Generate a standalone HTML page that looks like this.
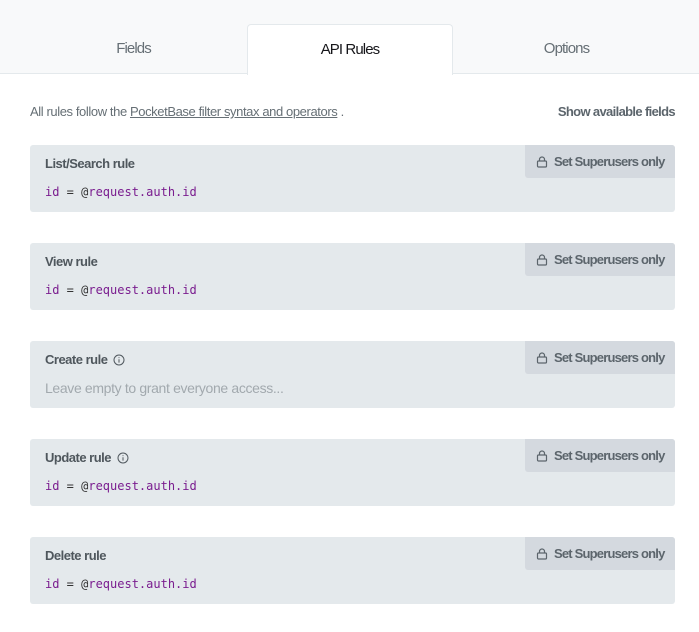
<!DOCTYPE html>
<html><head><meta charset="utf-8"><style>
*{box-sizing:border-box;margin:0;padding:0}
body{width:699px;height:632px;background:#fff;font-family:"Liberation Sans",sans-serif;color:#16161a;overflow:hidden;position:relative}
.top{position:absolute;left:0;top:0;width:699px;height:74px;background:#f8f9fa;border-bottom:1px solid #e4e9ec}
.tab{position:absolute;top:24px;height:50px;line-height:50px;text-align:center;font-size:15px;color:#666f75;letter-spacing:-0.9px}
.tab.act{background:#fff;border:1px solid #e4e9ec;border-bottom:none;border-radius:4px 4px 0 0;color:#16161a;height:51px}
.note{position:absolute;left:30px;top:104px;font-size:13px;color:#666f75;letter-spacing:-0.4px;white-space:nowrap}
.note u{text-decoration:underline}
.show{position:absolute;right:24px;top:104px;font-size:13px;font-weight:bold;color:#5c656c;letter-spacing:-0.65px;white-space:nowrap}
.blk{position:absolute;left:30px;width:645px;height:67px;background:#e4e9ec;border-radius:3px}
.lbl{position:absolute;left:15px;top:11px;font-size:13px;font-weight:bold;color:#4f575d;display:flex;align-items:center;gap:6px;letter-spacing:-0.5px;white-space:nowrap}
.code{position:absolute;left:15px;top:40px;font-family:"DejaVu Sans Mono","Liberation Mono",monospace;font-size:12px;color:#333}
.code .p{color:#7a1d8f}
.ph{position:absolute;left:15px;top:39px;font-size:14px;color:#a2a9ae;letter-spacing:-0.35px;white-space:nowrap}
.btn{position:absolute;right:0;top:0;width:150px;height:33px;background:#d4d9df;border-radius:0 3px 0 3px;font-size:13px;font-weight:bold;color:#5c656c;display:flex;align-items:center;padding-left:11px;gap:6px;white-space:nowrap;letter-spacing:-0.8px}
</style></head><body>
<div class="top"></div>
<div class="tab" style="left:20px;width:227px">Fields</div>
<div class="tab act" style="left:247px;width:206px">API Rules</div>
<div class="tab" style="left:453px;width:227px">Options</div>
<div class="note">All rules follow the <u>PocketBase filter syntax and operators</u> .</div>
<div class="show">Show available fields</div>

<div class="blk" style="top:145px"><div class="lbl">List/Search rule</div><div class="code"><span class="p">id</span> = @<span class="p">request.auth.id</span></div><div class="btn"><svg width="12" height="12" viewBox="0 0 12 12" fill="none" stroke="#5c656c" stroke-width="1.2"><rect x="1.5" y="5" width="9" height="6" rx="1"/><path d="M3.5 5V3.5a2.5 2.5 0 0 1 5 0V5"/></svg>Set Superusers only</div></div>

<div class="blk" style="top:243px"><div class="lbl">View rule</div><div class="code"><span class="p">id</span> = @<span class="p">request.auth.id</span></div><div class="btn"><svg width="12" height="12" viewBox="0 0 12 12" fill="none" stroke="#5c656c" stroke-width="1.2"><rect x="1.5" y="5" width="9" height="6" rx="1"/><path d="M3.5 5V3.5a2.5 2.5 0 0 1 5 0V5"/></svg>Set Superusers only</div></div>

<div class="blk" style="top:341px"><div class="lbl">Create rule <svg width="12" height="12" viewBox="0 0 12 12" fill="none" stroke="#4f575d" stroke-width="1"><circle cx="6" cy="6" r="5"/><path d="M6 5.2V8.6M6 3.3v.8"/></svg></div><div class="ph">Leave empty to grant everyone access...</div><div class="btn"><svg width="12" height="12" viewBox="0 0 12 12" fill="none" stroke="#5c656c" stroke-width="1.2"><rect x="1.5" y="5" width="9" height="6" rx="1"/><path d="M3.5 5V3.5a2.5 2.5 0 0 1 5 0V5"/></svg>Set Superusers only</div></div>

<div class="blk" style="top:439px"><div class="lbl">Update rule <svg width="12" height="12" viewBox="0 0 12 12" fill="none" stroke="#4f575d" stroke-width="1"><circle cx="6" cy="6" r="5"/><path d="M6 5.2V8.6M6 3.3v.8"/></svg></div><div class="code"><span class="p">id</span> = @<span class="p">request.auth.id</span></div><div class="btn"><svg width="12" height="12" viewBox="0 0 12 12" fill="none" stroke="#5c656c" stroke-width="1.2"><rect x="1.5" y="5" width="9" height="6" rx="1"/><path d="M3.5 5V3.5a2.5 2.5 0 0 1 5 0V5"/></svg>Set Superusers only</div></div>

<div class="blk" style="top:537px"><div class="lbl">Delete rule</div><div class="code"><span class="p">id</span> = @<span class="p">request.auth.id</span></div><div class="btn"><svg width="12" height="12" viewBox="0 0 12 12" fill="none" stroke="#5c656c" stroke-width="1.2"><rect x="1.5" y="5" width="9" height="6" rx="1"/><path d="M3.5 5V3.5a2.5 2.5 0 0 1 5 0V5"/></svg>Set Superusers only</div></div>
</body></html>
